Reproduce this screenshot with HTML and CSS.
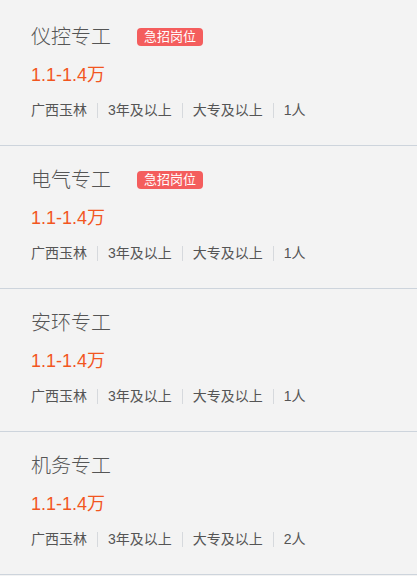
FILE: index.html
```html
<!DOCTYPE html>
<html lang="zh">
<head>
<meta charset="utf-8">
<title>职位列表</title>
<link rel="stylesheet" href="styles.css">
</head>
<body>
<ul class="job-list">
  <li class="job">
    <div class="job-head"><span class="job-title">仪控专工</span><span class="badge">急招岗位</span></div>
    <div class="salary">1.1-1.4万</div>
    <div class="meta"><span>广西玉林</span><span>3年及以上</span><span>大专及以上</span><span>1人</span></div>
  </li>
  <li class="job">
    <div class="job-head"><span class="job-title">电气专工</span><span class="badge">急招岗位</span></div>
    <div class="salary">1.1-1.4万</div>
    <div class="meta"><span>广西玉林</span><span>3年及以上</span><span>大专及以上</span><span>1人</span></div>
  </li>
  <li class="job">
    <div class="job-head"><span class="job-title">安环专工</span></div>
    <div class="salary">1.1-1.4万</div>
    <div class="meta"><span>广西玉林</span><span>3年及以上</span><span>大专及以上</span><span>1人</span></div>
  </li>
  <li class="job">
    <div class="job-head"><span class="job-title">机务专工</span></div>
    <div class="salary">1.1-1.4万</div>
    <div class="meta"><span>广西玉林</span><span>3年及以上</span><span>大专及以上</span><span>2人</span></div>
  </li>
</ul>
</body>
</html>
```
FILE: styles.css
```css
html, body {
  margin: 0;
  padding: 0;
  background: #f3f3f3;
}
body {
  font-family: "Liberation Sans", "Noto Sans CJK SC", sans-serif;
  color: #555;
}
.job-list {
  list-style: none;
  margin: 0;
  padding: 3px 0 0;
}
.job {
  box-sizing: border-box;
  height: 143px;
  padding: 20px 0 0 31px;
  border-bottom: 1px solid #cdd4dc;
}
.job-head {
  display: flex;
  align-items: center;
  height: 28px;
}
.job-title {
  font-size: 20px;
  line-height: 28px;
  color: #555;
  font-weight: 300;
}
.badge {
  margin-left: 26px;
  background: #f45d5d;
  color: #fff;
  font-size: 13px;
  line-height: 18px;
  padding: 0 7px;
  border-radius: 4px;
}
.salary {
  margin-top: 11px;
  font-size: 18px;
  line-height: 26px;
  color: #f2561f;
}
.meta {
  margin-top: 12px;
  display: flex;
  align-items: center;
  font-size: 14px;
  line-height: 20px;
  color: #555;
}
.meta span + span {
  margin-left: 10px;
  padding-left: 10px;
  border-left: 1px solid #d6d9dd;
  line-height: 15px;
}
```
